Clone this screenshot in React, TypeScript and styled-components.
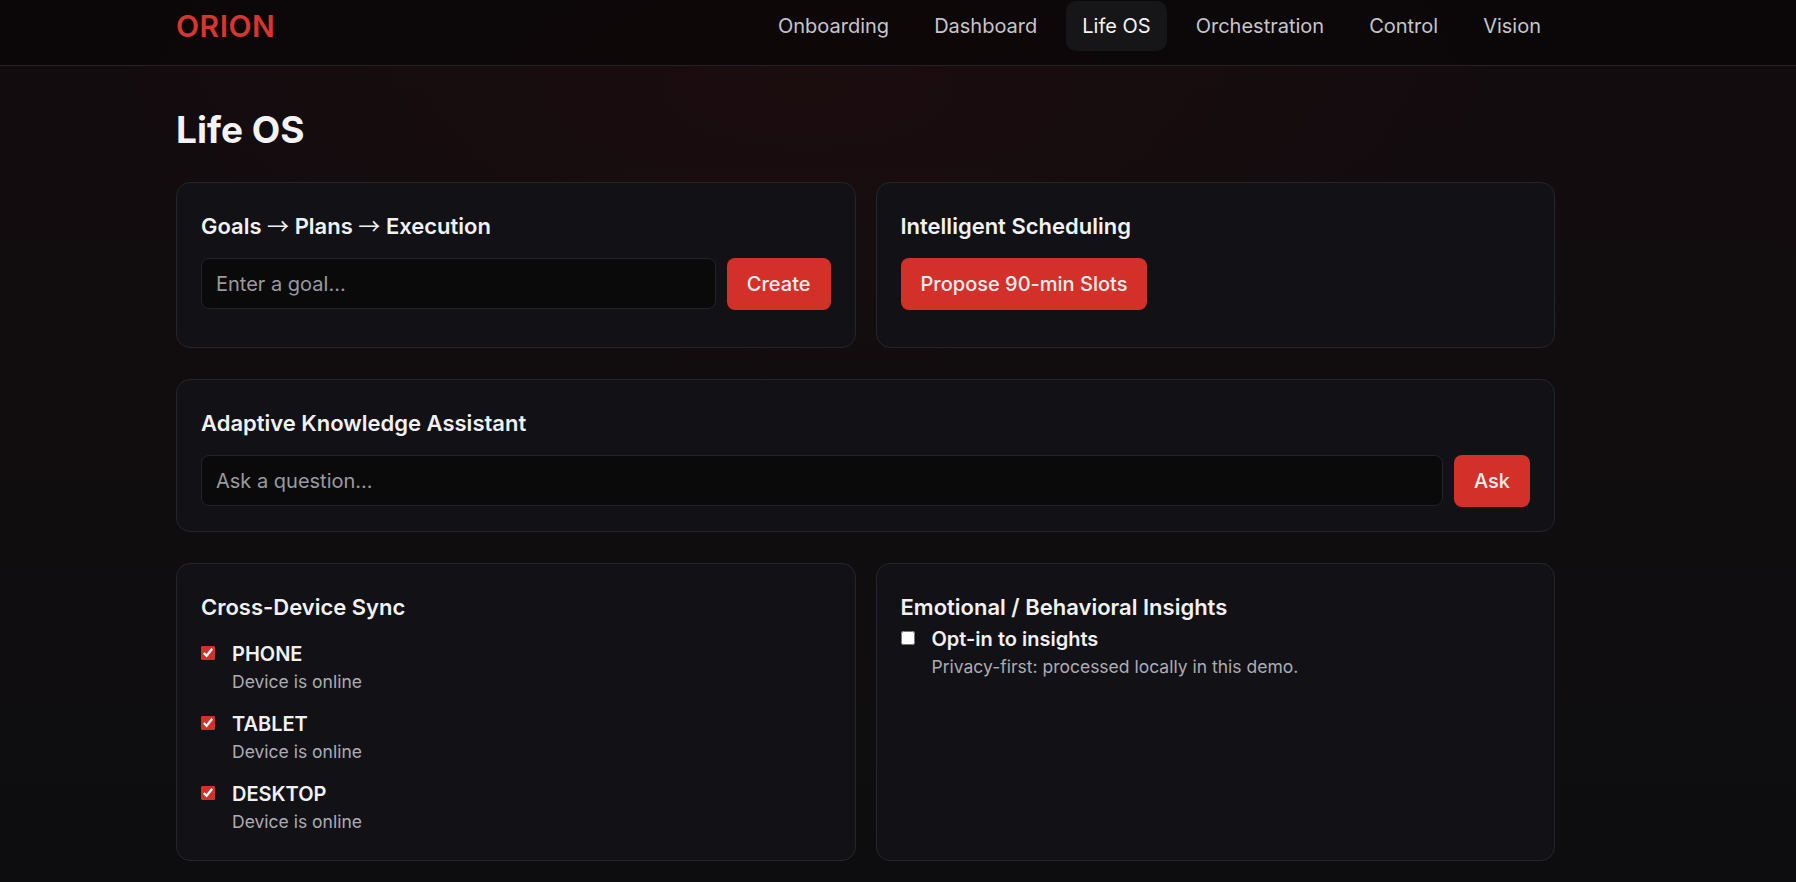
import React from "react";
import styled, { createGlobalStyle } from "styled-components";

const Global = createGlobalStyle`
  html, body { margin: 0; padding: 0; }
  body {
    min-height: 100vh;
    font-family: Inter, "Noto Sans", "Liberation Sans", sans-serif;
    color: #f1f1f4;
    background:
      radial-gradient(ellipse 55% 45% at 45% 10%, rgba(60, 12, 16, 0.22), transparent 70%),
      linear-gradient(180deg, #130c0e 0%, #110d0f 45%, #0d0d0f 100%);
    background-attachment: fixed;
  }
  * { box-sizing: border-box; }
`;

const Header = styled.header`
  height: 66px;
  border-bottom: 1px solid #272226;
  background: rgba(10, 6, 7, 0.8);
  padding-bottom: 14px;
  display: flex;
  align-items: center;
`;

const HeaderInner = styled.div`
  width: 1381px;
  margin-left: 176px;
  display: flex;
  align-items: center;
  justify-content: space-between;
`;

const Logo = styled.div`
  color: #d8352e;
  font-size: 30px;
  font-weight: 600;
  letter-spacing: 0.5px;
  line-height: 1;
`;

const Nav = styled.nav`
  display: flex;
  align-items: center;
  gap: 13px;
`;

const NavItem = styled.a<{ $active?: boolean }>`
  display: block;
  padding: 12px 16px;
  line-height: 26px;
  font-size: 20px;
  border-radius: 10px;
  text-decoration: none;
  color: ${(p) => (p.$active ? "#f4f4f6" : "#c6c5cb")};
  background: ${(p) => (p.$active ? "#161619" : "transparent")};
  cursor: pointer;
`;

const Main = styled.main`
  width: 1379px;
  margin-left: 176px;
  padding-top: 42px;
  padding-bottom: 40px;
`;

const PageTitle = styled.h1`
  margin: 0 0 30px;
  font-size: 37px;
  line-height: 44px;
  font-weight: 700;
  color: #f3f3f6;
`;

const Grid = styled.div<{ $cols: number }>`
  display: grid;
  grid-template-columns: repeat(${(p) => p.$cols}, 1fr);
  gap: 20px;
  margin-bottom: 31px;
`;

const Card = styled.section<{ $min?: number }>`
  background: #121115;
  border: 1px solid #26252a;
  border-radius: 14px;
  padding: 24px;
  min-height: ${(p) => (p.$min ? `${p.$min}px` : "auto")};
`;

const CardTitle = styled.h2<{ $gap: number }>`
  margin: 4px 0 ${(p) => p.$gap}px;
  font-size: 22px;
  line-height: 30px;
  height: 30px;
  font-weight: 600;
  color: #f1f1f4;
`;

const Arrow = styled.span`
  font-family: "Noto Sans CJK JP", sans-serif;
  font-weight: 400;
  line-height: 1;
`;

const Row = styled.div`
  display: flex;
  gap: 11px;
`;

const Input = styled.input`
  flex: 1;
  height: 51px;
  padding: 0 14px;
  border: 1px solid #242328;
  border-radius: 8px;
  background: #0a0a0b;
  color: #f1f1f4;
  font-family: inherit;
  font-size: 20px;
  outline: none;
  &::placeholder { color: #9a99a0; }
`;

const Button = styled.button`
  height: 52px;
  padding: 0 20px;
  border: none;
  border-radius: 8px;
  background: #d3302a;
  color: #fbeeee;
  font-family: inherit;
  font-size: 20px;
  font-weight: 500;
  cursor: pointer;
`;

const List = styled.div`
  display: flex;
  flex-direction: column;
  gap: 14px;
`;

const Item = styled.label`
  display: flex;
  align-items: flex-start;
  gap: 17px;
`;

const Check = styled.input`
  width: 14px;
  height: 14px;
  margin: 6px 0 0;
  accent-color: #d3302a;
  flex-shrink: 0;
`;

const ItemText = styled.div`
  display: flex;
  flex-direction: column;
`;

const ItemLabel = styled.span`
  font-size: 20px;
  line-height: 28px;
  font-weight: 600;
  color: #f1f1f4;
`;

const ItemDesc = styled.span`
  font-size: 17.5px;
  line-height: 28px;
  color: #adacb3;
`;

const navItems = ["Onboarding", "Dashboard", "Life OS", "Orchestration", "Control", "Vision"];
const devices = ["PHONE", "TABLET", "DESKTOP"];

export default function App() {
  return (
    <>
      <Global />
      <Header>
        <HeaderInner>
          <Logo>ORION</Logo>
          <Nav>
            {navItems.map((n) => (
              <NavItem key={n} $active={n === "Life OS"}>
                {n}
              </NavItem>
            ))}
          </Nav>
        </HeaderInner>
      </Header>
      <Main>
        <PageTitle>Life OS</PageTitle>
        <Grid $cols={2}>
          <Card $min={166}>
            <CardTitle $gap={17}>
              Goals <Arrow>→</Arrow> Plans <Arrow>→</Arrow> Execution
            </CardTitle>
            <Row>
              <Input placeholder="Enter a goal..." />
              <Button>Create</Button>
            </Row>
          </Card>
          <Card $min={166}>
            <CardTitle $gap={17}>Intelligent Scheduling</CardTitle>
            <Button>Propose 90-min Slots</Button>
          </Card>
        </Grid>
        <Grid $cols={1}>
          <Card>
            <CardTitle $gap={17}>Adaptive Knowledge Assistant</CardTitle>
            <Row>
              <Input placeholder="Ask a question..." />
              <Button>Ask</Button>
            </Row>
          </Card>
        </Grid>
        <Grid $cols={2}>
          <Card>
            <CardTitle $gap={18}>Cross-Device Sync</CardTitle>
            <List>
              {devices.map((d) => (
                <Item key={d}>
                  <Check type="checkbox" defaultChecked />
                  <ItemText>
                    <ItemLabel>{d}</ItemLabel>
                    <ItemDesc>Device is online</ItemDesc>
                  </ItemText>
                </Item>
              ))}
            </List>
          </Card>
          <Card>
            <CardTitle $gap={3}>Emotional / Behavioral Insights</CardTitle>
            <Item>
              <Check type="checkbox" />
              <ItemText>
                <ItemLabel>Opt-in to insights</ItemLabel>
                <ItemDesc>Privacy-first: processed locally in this demo.</ItemDesc>
              </ItemText>
            </Item>
          </Card>
        </Grid>
      </Main>
    </>
  );
}
